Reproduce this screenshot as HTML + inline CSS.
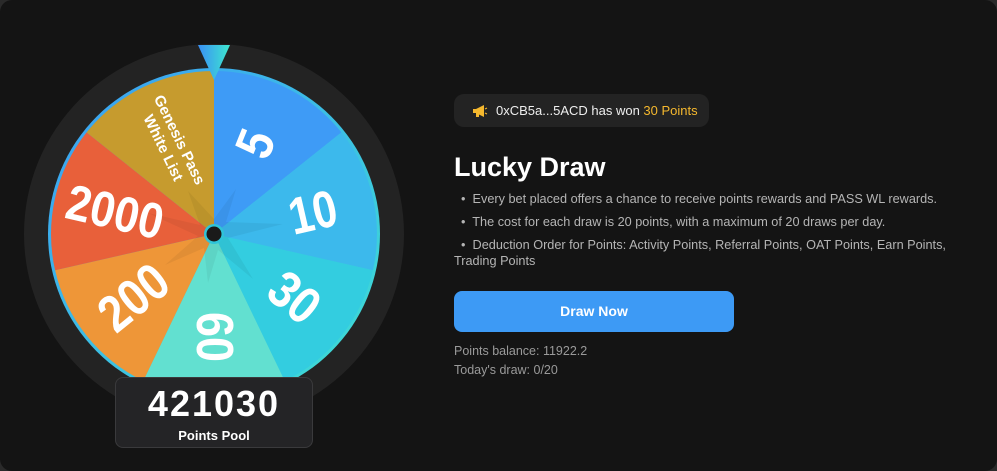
<!DOCTYPE html>
<html><head><meta charset="utf-8"><style>
html,body{margin:0;padding:0;background:#2a2a2a;}
.wrap{position:relative;width:997px;height:471px;background:#141414;border-radius:12px;overflow:hidden;font-family:"Liberation Sans",sans-serif;}
svg{position:absolute;left:0;top:0}
.pool{position:absolute;left:115px;top:377px;width:198px;height:71px;background:#242426;border:1px solid #3a3a3c;border-radius:8px;box-sizing:border-box;text-align:center;color:#fff}
.pool .n{font-weight:bold;font-size:36px;line-height:36px;margin-top:8px;letter-spacing:2px}
.pool .l{font-weight:bold;font-size:13px;margin-top:6px}
.pill{position:absolute;left:454px;top:94px;width:255px;height:33px;background:#232323;border-radius:10px;color:#eee;font-size:13px;line-height:33px}
.pill span.t{position:absolute;left:42px}
.y{color:#f5b82e}
h1{position:absolute;left:454px;top:150px;margin:0;color:#fff;font-size:27px;font-weight:bold;line-height:34px}
.b{position:absolute;left:454px;color:#b5b5b5;font-size:12.7px;line-height:16px;width:520px}
.btn{position:absolute;left:454px;top:291px;width:280px;height:41px;background:#3d9af5;border-radius:8px;color:#fff;font-weight:bold;font-size:14px;text-align:center;line-height:41px}
.s{position:absolute;left:454px;color:#9a9a9a;font-size:12.5px}
</style></head><body><div class="wrap">
<svg width="997" height="471" viewBox="0 0 997 471">
<defs>
<linearGradient id="rg" x1="0" y1="0" x2="1" y2="1"><stop offset="0" stop-color="#3a9df5"/><stop offset="1" stop-color="#3ee0d2"/></linearGradient>
<linearGradient id="pg" x1="0" y1="0" x2="1" y2="0"><stop offset="0" stop-color="#3a8ff5"/><stop offset="1" stop-color="#3ee8cf"/></linearGradient>
</defs>
<circle cx="214" cy="234" r="190" fill="#232323"/>
<circle cx="214" cy="234" r="166" fill="url(#rg)"/>
<path d="M214 234L214 71A163 163 0 0 1 341.4 132.4Z" fill="#3e9bf6"/>
<path d="M214 234L341.4 132.4A163 163 0 0 1 372.9 270.3Z" fill="#3cb9ec"/>
<path d="M214 234L372.9 270.3A163 163 0 0 1 284.7 380.9Z" fill="#33cde0"/>
<path d="M214 234L284.7 380.9A163 163 0 0 1 143.3 380.9Z" fill="#62e0d0"/>
<path d="M214 234L143.3 380.9A163 163 0 0 1 55.1 270.3Z" fill="#ee9638"/>
<path d="M214 234L55.1 270.3A163 163 0 0 1 86.6 132.4Z" fill="#e8603a"/>
<path d="M214 234L86.6 132.4A163 163 0 0 1 214 71Z" fill="#c69b2e"/>
<polygon fill="#000" opacity="0.05" points="236,189 226,222 283,224 228,238 253,279 218,250 208,283 204,248 165,265 198,236 148,213 200,225 188,191 214,219"/>
<g fill="#fff" font-weight="bold" font-family="Liberation Sans,sans-serif" text-anchor="middle" dominant-baseline="central" lengthAdjust="spacingAndGlyphs">
<text font-size="52" transform="translate(256,144) rotate(-68)" textLength="25" lengthAdjust="spacingAndGlyphs">5</text>
<text font-size="52" transform="translate(313,213) rotate(-13)" textLength="48" lengthAdjust="spacingAndGlyphs">10</text>
<text font-size="52" transform="translate(294,298) rotate(39)" textLength="50" lengthAdjust="spacingAndGlyphs">30</text>
<text font-size="52" transform="translate(214,337) rotate(90)" textLength="50" lengthAdjust="spacingAndGlyphs">60</text>
<text font-size="52" transform="translate(134,298) rotate(-39)" textLength="74" lengthAdjust="spacingAndGlyphs">200</text>
<text font-size="50" transform="translate(115,212) rotate(13)" textLength="98" lengthAdjust="spacingAndGlyphs">2000</text>
<g transform="translate(171,144) rotate(64)"><text font-size="15" y="-9">Genesis Pass</text><text font-size="15" y="9">White List</text></g>
</g>
<circle cx="214" cy="234" r="10" fill="#2fc4d8"/>
<circle cx="214" cy="234" r="7.5" fill="#1a1a1a"/>
<polygon points="198,45 230,45 214,80" fill="url(#pg)"/>
</svg>
<div class="pool"><div class="n">421030</div><div class="l">Points Pool</div></div>
<div class="pill"><svg width="16" height="14" viewBox="0 0 16 14" style="left:18px;top:10px"><path d="M1 5h3l8-4v12l-8-4H1z" fill="#f5b82e"/><rect x="4" y="8" width="3" height="5" fill="#f5b82e"/><path d="M13 5l2-1M13 9l2 1" stroke="#f5b82e"/></svg><span class="t">0xCB5a...5ACD has won <span class="y">30 Points</span></span></div>
<h1>Lucky Draw</h1>
<div class="b" style="top:191px">&nbsp; •&nbsp; Every bet placed offers a chance to receive points rewards and PASS WL rewards.</div>
<div class="b" style="top:214px">&nbsp; •&nbsp; The cost for each draw is 20 points, with a maximum of 20 draws per day.</div>
<div class="b" style="top:237px">&nbsp; •&nbsp; Deduction Order for Points: Activity Points, Referral Points, OAT Points, Earn Points, Trading Points</div>
<div class="btn">Draw Now</div>
<div class="s" style="top:344px">Points balance: 11922.2</div>
<div class="s" style="top:363px">Today's draw: 0/20</div>
</div></body></html>
